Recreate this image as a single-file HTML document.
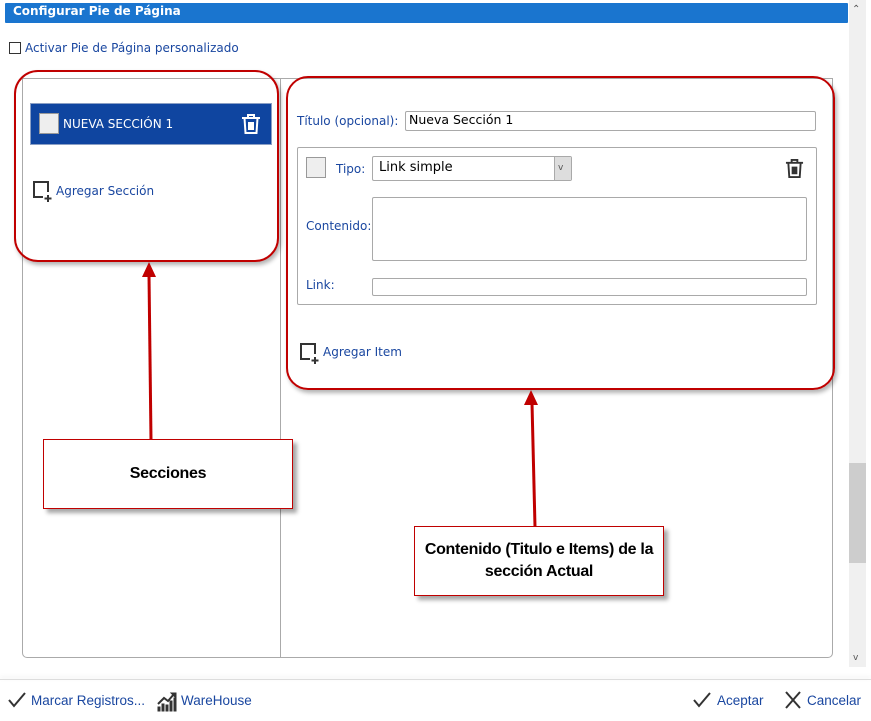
<!DOCTYPE html>
<html><head><meta charset="utf-8"><style>
*{margin:0;padding:0;box-sizing:border-box}
body{width:871px;height:721px;background:#fff;position:relative;overflow:hidden;font-family:"DejaVu Sans","Liberation Sans",sans-serif;font-size:12px;color:#1a47a0}
.a{position:absolute}
.t{white-space:nowrap;line-height:14px}
.inp{position:absolute;border:1px solid #a9a9a9;border-radius:2px;background:#fff}
.red{position:absolute;border:2px solid #c00000;box-shadow:2px 3px 4px rgba(0,0,0,.3)}
.box{position:absolute;border:1px solid #c00000;background:#fff;box-shadow:4px 4px 4px rgba(0,0,0,.35);font-family:"Liberation Sans",Arial,sans-serif;font-weight:bold;font-size:16px;color:#000;text-align:center;display:flex;align-items:center;justify-content:center;line-height:22px;letter-spacing:-0.3px}
.ft{font-family:"Liberation Sans",sans-serif;font-size:13.5px;color:#1a47a0}
</style></head><body>
<div class="a" style="left:5px;top:3px;width:843px;height:20px;background:#1a75cf;border-radius:1px"></div>
<div class="a t" style="left:13px;top:4px;color:#fff;font-weight:bold;font-size:12px">Configurar Pie de Página</div>
<div class="a" style="left:849px;top:0;width:17px;height:667px;background:#f0f0f0"></div>
<div class="a" style="left:849px;top:463px;width:17px;height:100px;background:#cdcdcd"></div>
<div class="a t" style="left:852px;top:3px;color:#555;font-size:10px">⌃</div>
<div class="a t" style="left:853px;top:651px;color:#555;font-size:9px">v</div>

<div class="a" style="left:9px;top:42px;width:12px;height:12px;border:1px solid #333"></div>
<div class="a t" style="left:25px;top:41px;font-size:12px">Activar Pie de Página personalizado</div>

<div class="a" style="left:22px;top:78px;width:811px;height:580px;border:1px solid #aaa;border-radius:0 0 5px 5px"></div>
<div class="a" style="left:280px;top:78px;width:1px;height:579px;background:#aaa"></div>

<div class="red" style="left:14px;top:70px;width:265px;height:192px;border-radius:24px"></div>
<div class="red" style="left:286px;top:76px;width:549px;height:314px;border-radius:22px"></div>

<div class="a" style="left:30px;top:103px;width:242px;height:42px;background:#0f45a0;border:1px solid #8a9fc5"></div>
<div class="a" style="left:39px;top:113px;width:20px;height:21px;background:#eee;border:1px solid #999"></div>
<div class="a t" style="left:63px;top:117px;color:#fff;font-size:12px">NUEVA SECCIÓN 1</div>
<svg class="a" style="left:241px;top:113px" width="20" height="22" viewBox="0 0 20 22" fill="none" stroke="#fff" stroke-width="2"><path d="M1 5h18M7 5V2h6v3M3.5 5l1 15h11l1-15M8 9v8M10 9v8M12 9v8"/></svg>

<svg class="a" style="left:33px;top:181px" width="19" height="22" viewBox="0 0 19 22" fill="none" stroke="#333" stroke-width="2"><path d="M10 16H1V1h14v10M15 14v7M11.5 17.5h7"/></svg>
<div class="a t" style="left:56px;top:184px;font-size:12px">Agregar Sección</div>

<div class="a t" style="left:297px;top:114px">Título (opcional):</div>
<div class="inp" style="left:405px;top:111px;width:411px;height:20px"></div>
<div class="a t" style="left:409px;top:113px;color:#000;font-size:12.5px">Nueva Sección 1</div>

<div class="a" style="left:297px;top:147px;width:520px;height:158px;border:1px solid #aaa;border-radius:2px"></div>
<div class="a" style="left:306px;top:157px;width:20px;height:21px;background:#eee;border:1px solid #999"></div>
<div class="a t" style="left:336px;top:162px">Tipo:</div>
<div class="inp" style="left:372px;top:156px;width:200px;height:25px"></div>
<div class="a" style="left:554px;top:157px;width:17px;height:23px;background:#ddd;border-left:1px solid #aaa"></div>
<div class="a t" style="left:558px;top:161px;color:#555;font-size:9px">v</div>
<div class="a t" style="left:379px;top:161px;color:#000;font-size:13px">Link simple</div>
<svg class="a" style="left:785px;top:158px" width="19" height="21" viewBox="0 0 20 22" fill="none" stroke="#333" stroke-width="2"><path d="M1 5h18M7 5V2h6v3M3.5 5l1 15h11l1-15M8 9v8M10 9v8M12 9v8"/></svg>

<div class="a t" style="left:306px;top:219px">Contenido:</div>
<div class="inp" style="left:372px;top:197px;width:435px;height:64px"></div>
<div class="a t" style="left:306px;top:278px">Link:</div>
<div class="inp" style="left:372px;top:278px;width:435px;height:18px"></div>

<svg class="a" style="left:300px;top:343px" width="19" height="22" viewBox="0 0 19 22" fill="none" stroke="#333" stroke-width="2"><path d="M10 16H1V1h14v10M15 14v7M11.5 17.5h7"/></svg>
<div class="a t" style="left:323px;top:345px;font-size:12px">Agregar Item</div>

<svg class="a" style="left:0;top:0" width="871" height="721">
<g stroke="#c00000" stroke-width="3" fill="#c00000">
<line x1="151" y1="440" x2="149" y2="275"/><path d="M149 262l-7 15h14z" stroke="none"/>
<line x1="535" y1="527" x2="532" y2="403"/><path d="M531 390l-7 15h14z" stroke="none"/>
</g></svg>
<div class="box" style="left:43px;top:439px;width:250px;height:70px">Secciones</div>
<div class="box" style="left:414px;top:526px;width:250px;height:70px">Contenido (Titulo e Items) de la<br>sección Actual</div>

<div class="a" style="left:0;top:679px;width:871px;height:1px;background:#ddd;box-shadow:0 -2px 4px rgba(0,0,0,.12)"></div>
<svg class="a" style="left:8px;top:692px" width="18" height="16" viewBox="0 0 18 16" fill="none" stroke="#333" stroke-width="2"><path d="M1 8l5 6L17 1"/></svg>
<div class="a t ft" style="left:31px;top:694px">Marcar Registros...</div>
<svg class="a" style="left:157px;top:690px" width="20" height="22" viewBox="0 0 20 22" fill="#333" stroke="#333"><path d="M1 14L7 8l4 3 6-7" fill="none" stroke-width="2"/><path d="M14 3h5v5z"/><rect x="1" y="17" width="2" height="4"/><rect x="5" y="14" width="2" height="7"/><rect x="9" y="15" width="2" height="6"/><rect x="13" y="11" width="2" height="10"/><rect x="17" y="8" width="2" height="13"/></svg>
<div class="a t ft" style="left:181px;top:694px">WareHouse</div>
<svg class="a" style="left:693px;top:692px" width="18" height="16" viewBox="0 0 18 16" fill="none" stroke="#333" stroke-width="2"><path d="M1 8l5 6L17 1"/></svg>
<div class="a t ft" style="left:717px;top:694px">Aceptar</div>
<svg class="a" style="left:784px;top:691px" width="18" height="18" viewBox="0 0 18 18" fill="none" stroke="#333" stroke-width="2"><path d="M2 1l14 16M16 1L2 17"/></svg>
<div class="a t ft" style="left:807px;top:694px">Cancelar</div>
</body></html>
